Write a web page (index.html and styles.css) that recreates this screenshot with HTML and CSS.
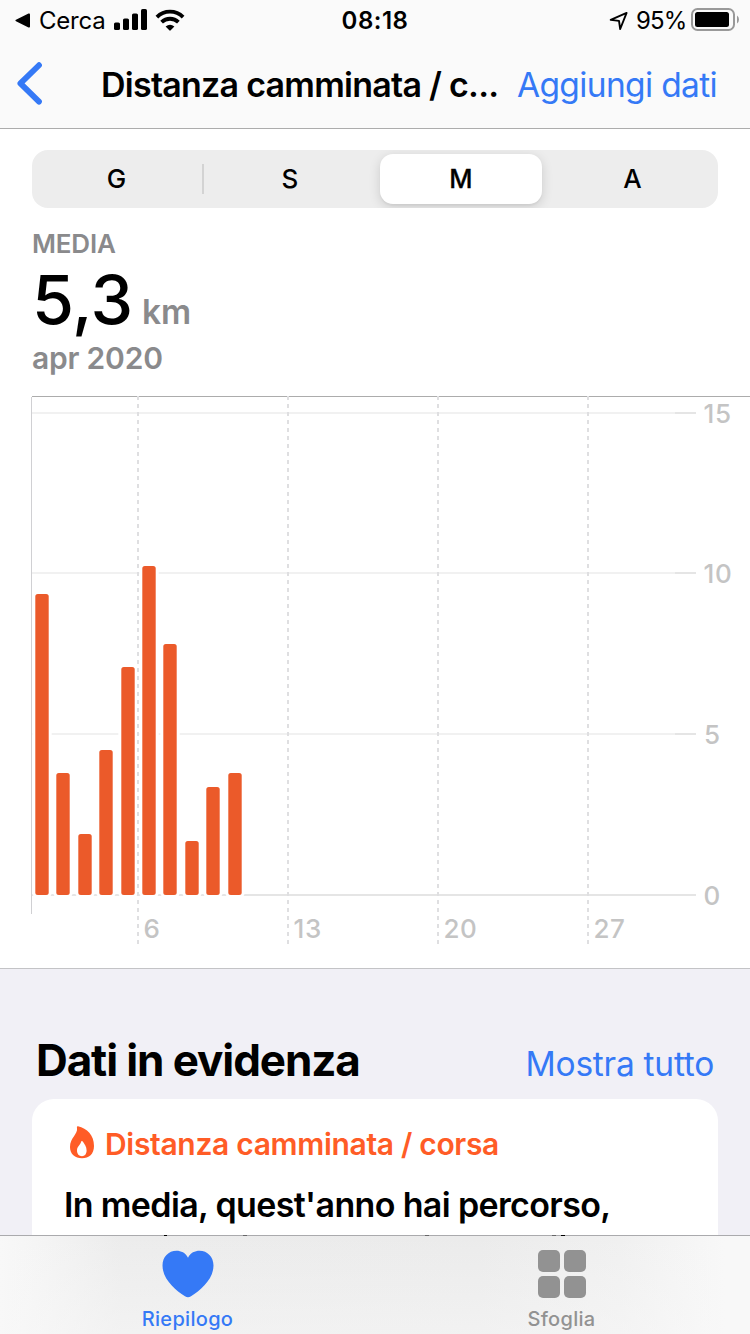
FILE: index.html
```html
<!DOCTYPE html>
<html lang="it">
<head>
<meta charset="utf-8">
<title>Distanza camminata / corsa</title>
<link rel="stylesheet" href="styles.css">
</head>
<body>
<div class="screen">
  <header class="top">
    <div class="status">
      <div class="status-left">
        <svg class="back-app" width="16" height="15" viewBox="0 0 16 15"><path d="M1 6.8 Q-.2 7.5 1 8.2 L13.5 14.4 Q15 15 15 13.5 V1.5 Q15 0 13.5.6Z"/></svg>
        <span class="cerca">Cerca</span>
        <svg class="signal" width="34" height="22" viewBox="0 0 34 22"><rect x="0" y="13.500" width="6" height="7.500" rx="1.6"/><rect x="9" y="9.500" width="6" height="11.500" rx="1.6"/><rect x="18" y="4.500" width="6" height="16.500" rx="1.6"/><rect x="27" y="0" width="6" height="21" rx="1.6"/></svg>
        <svg class="wifi" width="30" height="22" viewBox="0 0 30 22"><g fill="none" stroke="#000" stroke-width="3.8"><path d="M1.9 8.1 A18.6 18.6 0 0 1 28.1 8.1"/><path d="M6.6 13.2 A12 12 0 0 1 23.4 13.2"/></g><path d="M10.6 17.6 Q15 13.8 19.4 17.6 L15.7 21.3 Q15 22 14.3 21.3Z"/></svg>
      </div>
      <span class="clock">08:18</span>
      <div class="status-right">
        <svg class="locate" width="20" height="20" viewBox="0 0 20 20"><path d="M1.7 8.9 L17.6 1.9 L11.2 18 L10 9.9Z" fill="none" stroke="#000" stroke-width="1.9" stroke-linejoin="round"/></svg>
        <span class="percent">95%</span>
        <svg class="battery" width="48" height="24" viewBox="0 0 48 24"><rect x="1" y="1" width="42" height="21" rx="5.5" fill="none" stroke="#999" stroke-width="2"/><rect x="4" y="4" width="34" height="15" rx="2.5"/><path d="M46 7.5 Q48 9 48 11.5 T46 15.5Z" fill="#999"/></svg>
      </div>
    </div>
    <nav class="nav">
      <svg class="chevron" width="26" height="43" viewBox="0 0 26 43"><path d="M22 3.2 L3.4 21.4 L22 39.6" fill="none" stroke="#3579f6" stroke-width="5.8" stroke-linecap="round" stroke-linejoin="round"/></svg>
      <h1 class="title">Distanza camminata / c...</h1>
      <a class="add">Aggiungi dati</a>
    </nav>
  </header>
  <main class="content">
    <div class="segments">
      <span class="seg seg-first">G</span><span class="seg">S</span><span class="seg seg-on">M</span><span class="seg seg-last">A</span>
    </div>
    <section class="summary">
      <div class="label">MEDIA</div>
      <div class="value"><span class="number">5,3</span><span class="unit">km</span></div>
      <div class="period">apr 2020</div>
    </section>
    <svg class="chart" width="750" height="572" viewBox="0 396 750 572">
      <g class="grid"><path d="M32 413H696M32 573H696M32 734H696"/></g>
      <path class="base" d="M675 413H696M675 573H696M675 734H696M32 895H696"/>
      <path class="edge" d="M31.5 397V914"/>
      <path class="rule" d="M32 396.5H750"/>
      <g class="bars">
        <rect x="35.3" y="594" width="13.4" height="301"/><rect x="56.3" y="773" width="13.4" height="122"/><rect x="78.3" y="834" width="13.4" height="61"/><rect x="99.3" y="750" width="13.4" height="145"/><rect x="121.3" y="667" width="13.4" height="228"/><rect x="142.3" y="566" width="13.4" height="329"/><rect x="163.3" y="644" width="13.4" height="251"/><rect x="185.3" y="841" width="13.4" height="54"/><rect x="206.3" y="787" width="13.4" height="108"/><rect x="228.3" y="773" width="13.4" height="122"/>
      </g>
      <path class="weeks" d="M138 396V944M288 396V944M438 396V944M588 396V944"/>
      <g class="ticks">
        <text x="143.500" y="938">6</text><text x="293.500" y="938">13</text><text x="443.500" y="938">20</text><text x="593.500" y="938">27</text>
        <text x="703.500" y="423">15</text><text x="703.500" y="583">10</text><text x="704" y="744">5</text><text x="703.500" y="905">0</text>
      </g>
    </svg>
  </main>
  <section class="highlights">
    <div class="heading"><h2 class="h2">Dati in evidenza</h2><a class="all">Mostra tutto</a></div>
    <article class="card">
      <div class="card-head">
        <svg class="flame" width="26" height="33" viewBox="0 0 26 33"><path fill-rule="evenodd" d="M9 .3 C8 0 7.800.8 8 2 C9 8 1 12 1 21 C1 28 6 32.300 13 32.300 C20 32.300 25 28 25 20 C25 9 18 2.500 9 .3Z M12.300 15.300 Q13 14.500 13.800 15.500 C15.500 18 17.600 20.500 17.600 24.500 C17.600 28 15.700 30.200 13 30.200 C10 30.200 8 28 8 24.500 C8 20.500 11.500 19 12.300 15.300Z"/></svg>
        <span class="card-title">Distanza camminata / corsa</span>
      </div>
      <p class="card-text">In media, quest'anno hai percorso,</p>
    </article>
  </section>
  <footer class="tabs">
    <svg class="peek" width="750" height="1" viewBox="0 0 750 1"><path d="M164 0h3v1h-3zM561 0h4v1h-4z"/><path opacity=".4" d="M243 0h4v1h-4zM425 0h4v1h-4zM552 0h4v1h-4z"/></svg>
    <div class="tab tab-on">
      <svg width="52" height="48" viewBox="0 0 52 48"><path d="M26 7.700 C23.500 2.800 19 .8 14.500 .8 C6.500.8.500 7 .5 15.500 C.5 29 13 40 23 46.200 Q26 48.200 29 46.200 C39 40 51.500 29 51.500 15.500 C51.500 7 45.500.8 37.500.8 C33 .8 28.500 2.800 26 7.700Z"/></svg>
      <span class="tab-label">Riepilogo</span>
    </div>
    <div class="tab tab-off">
      <svg width="48" height="48" viewBox="0 0 48 48"><rect width="22" height="22" rx="5"/><rect x="26" width="22" height="22" rx="5"/><rect y="26" width="22" height="22" rx="5"/><rect x="26" y="26" width="22" height="22" rx="5"/></svg>
      <span class="tab-label">Sfoglia</span>
    </div>
  </footer>
</div>
</body>
</html>
```
FILE: styles.css
```css
* { box-sizing: border-box; }
body { margin: 0; font-family: Inter, "Liberation Sans", sans-serif; color: #000; background: #fff; }
h1, h2, p { margin: 0; }
svg { display: block; flex: none; }
.screen { width: 750px; height: 1334px; display: flex; flex-direction: column; overflow: hidden; white-space: nowrap; }
.top { height: 129px; flex: none; background: #fafafa; border-bottom: 1px solid #acacac; }
.status { height: 40px; display: grid; grid-template-columns: 300px 150px 300px; line-height: 40px; font-size: 24px; }
.status-left { display: flex; padding-left: 15px; }
.back-app { margin-top: 13px; }
.cerca { width: 66px; margin: 1px 0 0 8px; letter-spacing: -.2px; }
.signal { margin: 9px 0 0 9px; }
.wifi { margin: 9px 0 0 7px; }
.clock { text-align: center; font-weight: 600; letter-spacing: .5px; margin-top: 1px; }
.status-right { display: flex; padding-left: 159px; }
.locate { margin-top: 11px; }
.percent { width: 51px; margin: 1px 0 0 7px; letter-spacing: -.8px; }
.battery { margin: 8px 0 0 4px; }
.nav { height: 88px; display: flex; line-height: 90px; padding-left: 17px; }
.chevron { margin-top: 22px; }
.title { width: 417px; margin-left: 58px; font-size: 34px; font-weight: 600; letter-spacing: -.75px; }
.add { margin-left: -1px; font-size: 33.5px; color: #3579f6; letter-spacing: -.65px; }
.content { height: 839px; flex: none; background: #fff; }
.segments { display: grid; grid-template-columns: 172px 172px 171px 171px; height: 58px; margin: 21px 32px 0; background: #ededed; border-radius: 16px; line-height: 58px; text-align: center; font-size: 26px; font-weight: 500; overflow: hidden; }
.seg-first { padding-right: 3px; background: linear-gradient(#d3d3d3, #d3d3d3) right 14px / 2px 30px no-repeat; }
.seg-on { margin: 4px 5px 4px 4px; line-height: 50px; border-radius: 13px; background: #fff; font-size: 25.5px; box-shadow: 0 3px 12px rgba(0,0,0,.14), 0 2px 2px rgba(0,0,0,.04); -webkit-text-stroke: .3px #000; }
.summary { height: 188px; padding-left: 32px; color: #8a8a8c; font-weight: 600; }
.label { height: 53px; padding-top: 17px; line-height: 38px; font-size: 26px; letter-spacing: -.2px; }
.value { height: 77px; display: flex; align-items: baseline; line-height: 76px; }
.number { width: 110px; color: #000; font-size: 68px; font-weight: 500; letter-spacing: -.3px; }
.unit { font-size: 33.5px; }
.period { height: 40px; line-height: 40px; font-size: 30px; letter-spacing: -.2px; }
.grid { stroke: #f1f1f1; stroke-width: 2; }
.base { stroke: #e5e5e5; stroke-width: 2; }
.edge { stroke: #d0d0d3; stroke-width: 1; }
.rule { stroke: #acacac; stroke-width: 1; }
.bars { fill: #eb5a2a; stroke: #fff; stroke-width: 6; paint-order: stroke; }
.bars rect { rx: 2.500px; }
.weeks { stroke: #dfdfe1; stroke-width: 2; stroke-dasharray: 4 4; }
.ticks { fill: #c4c4c4; font-size: 26px; font-weight: 450; letter-spacing: .6px; }
.highlights { height: 267px; flex: none; background: #f1f0f6; border-top: 1px solid #c3c3c6; padding: 61px 32px 0; overflow: hidden; }
.heading { height: 69px; display: flex; justify-content: space-between; line-height: 60px; padding: 0 4px; }
.h2 { font-size: 44px; font-weight: 700; letter-spacing: -1.1px; }
.all { color: #3579f6; font-size: 33.5px; padding-top: 4px; letter-spacing: -.25px; }
.card { height: 160px; padding: 26px 32px; background: #fff; border-radius: 22px; }
.card-head { height: 38px; display: flex; color: #ff5c26; padding-left: 5px; line-height: 38px; }
.flame { margin-top: 1px; fill: #ff5c26; }
.card-title { margin-left: 10px; font-size: 30px; font-weight: 600; letter-spacing: -.32px; }
.card-text { margin-top: 21px; line-height: 42px; font-size: 34px; font-weight: 600; letter-spacing: -.64px; }
.tabs { position: relative; height: 99px; flex: none; display: grid; grid-template-columns: 375px 375px; border-top: 1px solid #aaaaad; background: linear-gradient(#f8f8f800 0%, #f8f8f880 100%), linear-gradient(90deg, #f8f8f8 0, #f5f5f5 35px, #ececec 120px, #ebebeb 480px, #f0f0f0 620px, #f8f8f8 725px); }
/* ascender tips of the scrolled text crossing the hairline */
.peek { position: absolute; top: -1px; left: 0; }
.tab { display: flex; flex-direction: column; align-items: center; padding-top: 14px; color: #929292; fill: #929292; }
.tab-on { color: #3579f6; fill: #3579f6; }
.tab-off { padding-right: 2px; }
.tab-label { font-size: 20px; line-height: 24px; margin-top: 9px; font-weight: 500; letter-spacing: .3px; }
```
